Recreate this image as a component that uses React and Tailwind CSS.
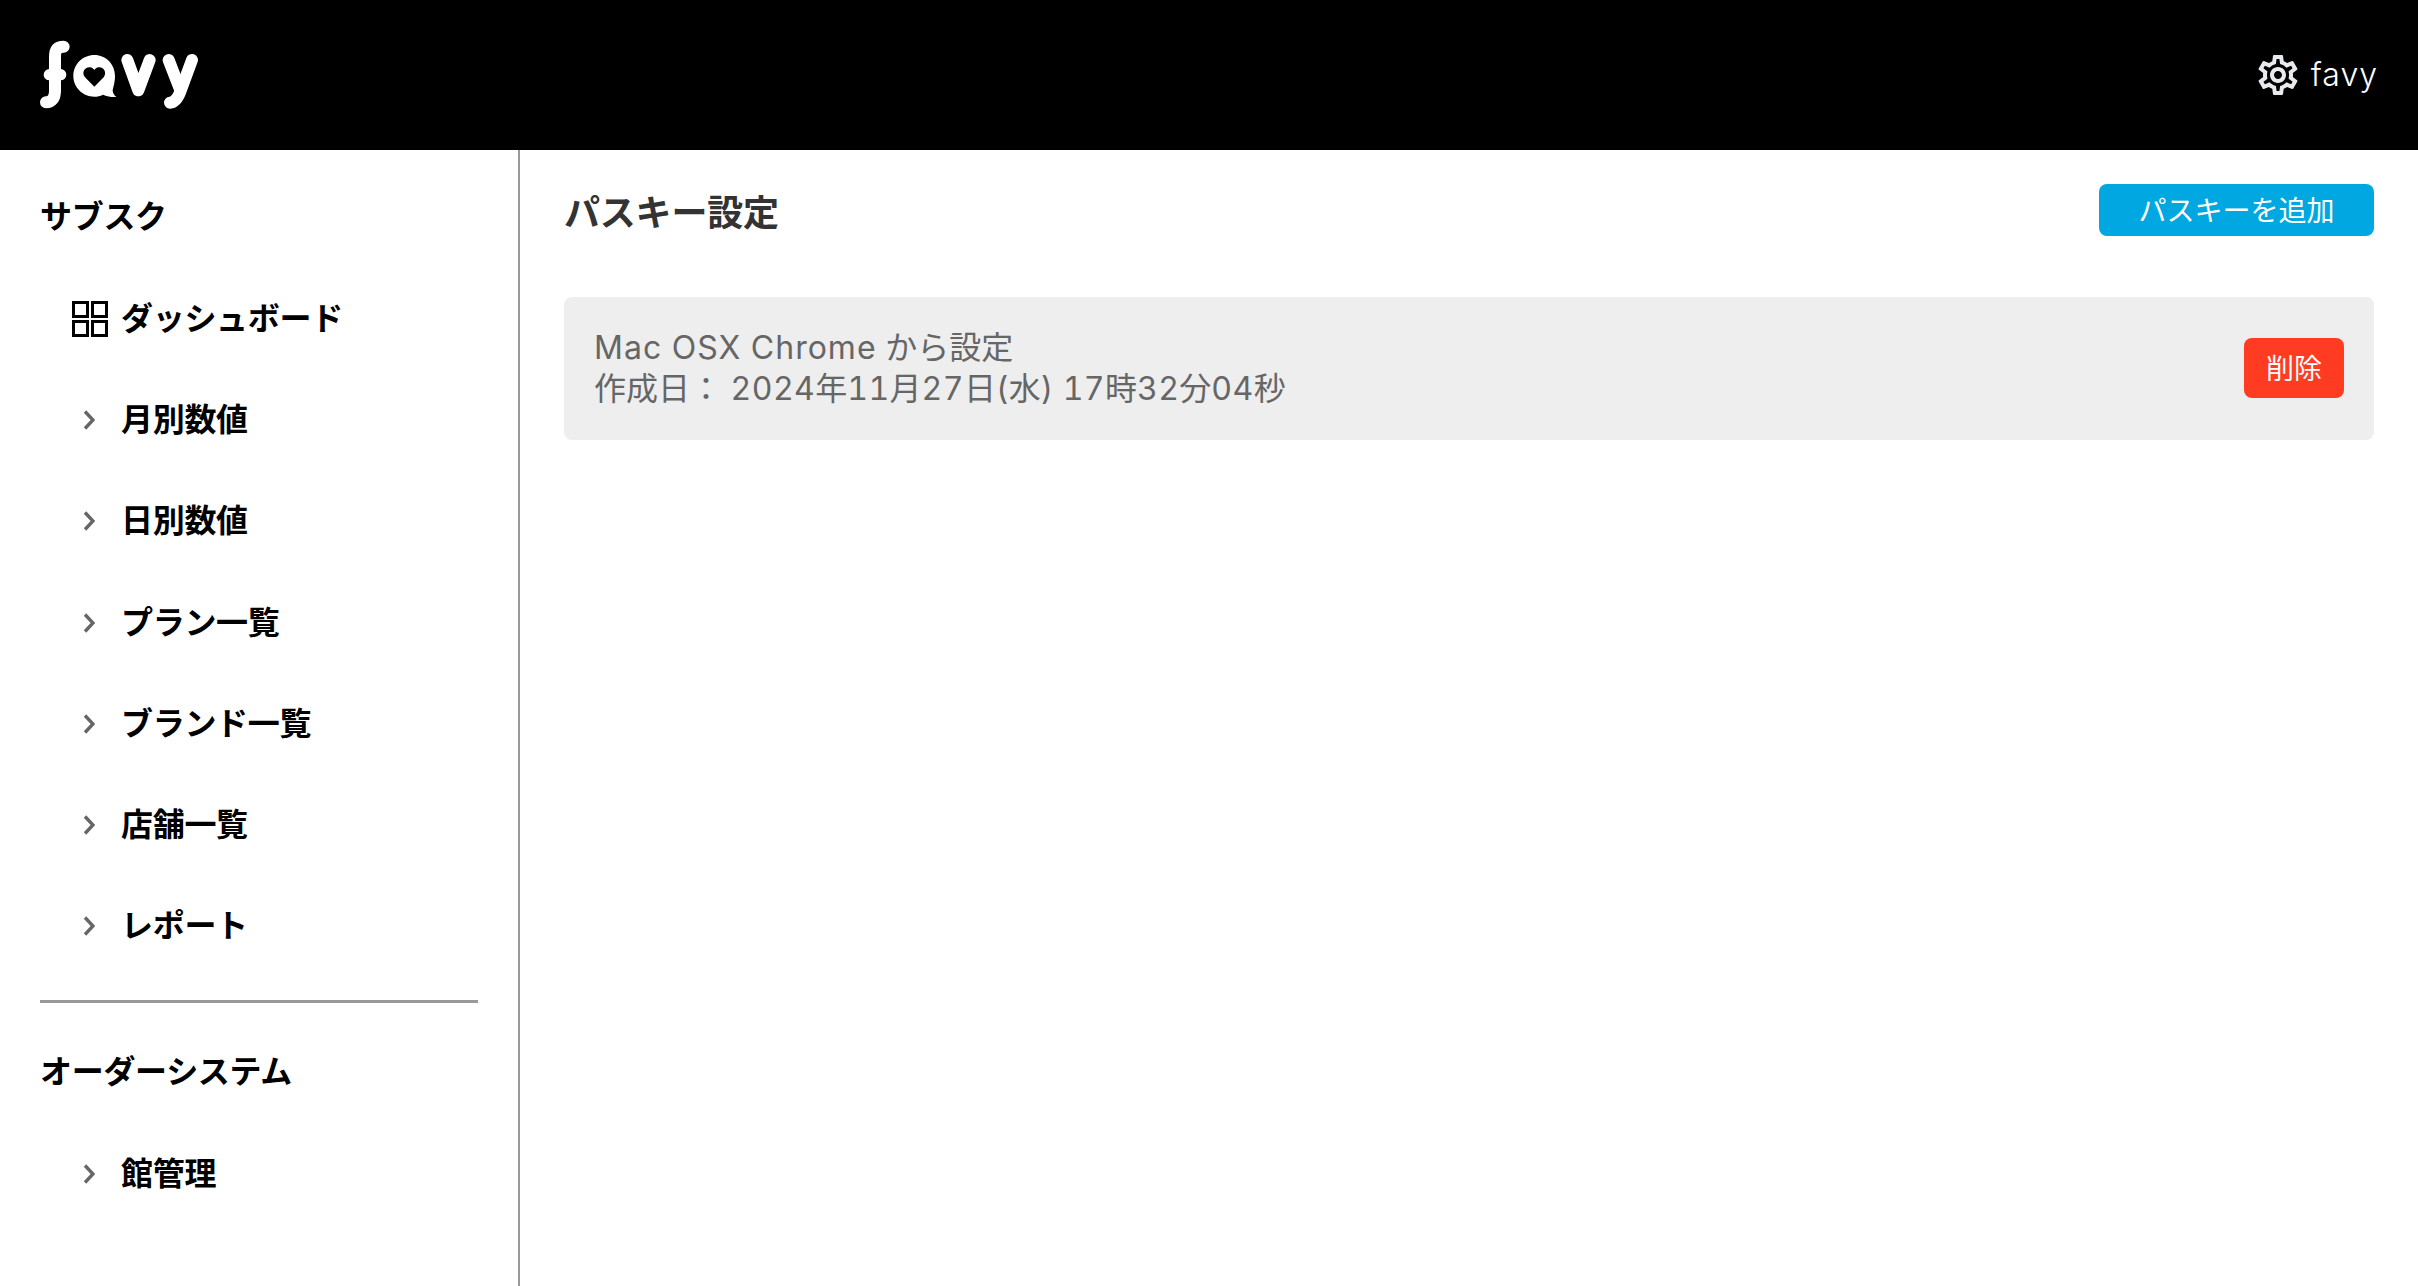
import { MdOutlineSettings } from 'react-icons/md'

const JP = "font-['Inter','Noto_Sans_CJK_JP',sans-serif]"

function Logo() {
    return (
        <svg width="170" height="80" viewBox="105 105 510 240" className="block">
            <g fill="none" stroke="#fff" strokeWidth="36" strokeLinecap="round" strokeLinejoin="round">
                <path d="M191 140 C172 140 165 150 165 170 L165 272 C165 295 155 307 138 307" />
                <path d="M148 224 L182 224" strokeWidth="34" />
                <path d="M382 180 L415 271 L449 180" />
                <path d="M506 180 L540 268" />
                <path d="M576 180 L542 272 C534 295 525 307 510 308" />
            </g>
            <path
                fillRule="evenodd"
                fill="#fff"
                d="M283 165 C318 165 345 193 345 228 C345 250 338 265 338 272 C339 280 343 286 349 291 C335 292 320 288 309 284 C301 288 292 290 283 290 C248 290 220 262 220 228 C220 193 248 165 283 165 Z M283 260 L255 232 C243 218 255 200 270 202 C276 203 280 206 283 210 C286 206 290 203 296 202 C311 200 322 218 311 232 Z"
            />
        </svg>
    )
}

function GridIcon() {
    return (
        <svg width="36" height="36" viewBox="0 0 36 36" fill="none" stroke="#000" strokeWidth="3" className="block">
            <rect x="1.5" y="1.5" width="14" height="14" />
            <rect x="20.5" y="1.5" width="14" height="14" />
            <rect x="1.5" y="20.5" width="14" height="14" />
            <rect x="20.5" y="20.5" width="14" height="14" />
        </svg>
    )
}

function Chevron() {
    return (
        <svg width="12" height="20" viewBox="0 0 12 20" fill="none" stroke="#666" strokeWidth="3.4" className="block ml-[11px]">
            <path d="M2 1.5 L10 10 L2 18.5" />
        </svg>
    )
}

function NavItem({ label, icon }) {
    return (
        <div className="flex items-center h-[101.3px] pt-[2px]">
            <div className="w-[121px] pl-[72px] shrink-0 flex items-center">
                {icon ? <GridIcon /> : <Chevron />}
            </div>
            <span className="text-[32px] leading-[40px] font-bold text-black tracking-[-0.3px]">{label}</span>
        </div>
    )
}

function SectionTitle({ children, className }) {
    return <div className={`text-[32px] leading-[40px] font-bold text-black pl-10 tracking-[-0.3px] ${className}`}>{children}</div>
}

export default function App() {
    const items = ['月別数値', '日別数値', 'プラン一覧', 'ブランド一覧', '店舗一覧', 'レポート']

    return (
        <div className={`h-screen overflow-hidden bg-white flex flex-col ${JP}`}>
            {/* Header */}
            <header className="h-[150px] shrink-0 bg-black flex items-center justify-between pl-[35px] pr-10">
                <Logo />
                <div className="flex items-center gap-[9px]">
                    <MdOutlineSettings size={48} color="#e8eaed" />
                    <span className="text-[32px] text-white font-light tracking-[1px]">favy</span>
                </div>
            </header>

            <div className="flex flex-1 min-h-0">
                {/* Sidebar */}
                <aside className="w-[520px] shrink-0 border-r-2 border-[#999] pt-[47px]">
                    <SectionTitle className="mb-[30px]">サブスク</SectionTitle>
                    <NavItem label="ダッシュボード" icon />
                    {items.map(label => <NavItem key={label} label={label} />)}
                    <hr className="mt-[24px] mx-10 border-t-[3px] border-[#999]" />
                    <SectionTitle className="mt-[49px] mb-[30px]">オーダーシステム</SectionTitle>
                    <NavItem label="館管理" />
                </aside>

                {/* Main */}
                <main className="flex-1 pl-11 pr-11 pt-[34px]">
                    <div className="flex items-start justify-between h-[113px]">
                        <h1 className="text-[36px] leading-[58px] font-bold text-[#333] tracking-[-0.2px]">パスキー設定</h1>
                        <button className="w-[275px] h-[52px] rounded-lg bg-[#00a7e1] text-white text-[28px] leading-none pt-[2px]">パスキーを追加</button>
                    </div>
                    <div className="h-[143px] bg-[#eee] rounded-lg flex items-center justify-between pl-[30px] pr-[30px]">
                        <div className="text-[32px] leading-[41px] text-[#666] tabular-nums mb-[1px]">
                            <p><span className="tracking-[1px]">Mac OSX Chrome</span> から設定</p>
                            <p>作成日： <span className="tracking-[0.4px]">2024</span>年<span className="tracking-[0.4px]">11</span>月<span className="tracking-[0.4px]">27</span>日<span className="tracking-[0.4px]">(</span>水<span className="tracking-[0.4px]">) 17</span>時<span className="tracking-[0.4px]">32</span>分<span className="tracking-[0.4px]">04</span>秒</p>
                        </div>
                        <button className="w-[100px] h-[60px] mb-[2px] pt-[2px] rounded-lg bg-[#ff3b22] text-white text-[28px] leading-none">削除</button>
                    </div>
                </main>
            </div>
        </div>
    )
}
